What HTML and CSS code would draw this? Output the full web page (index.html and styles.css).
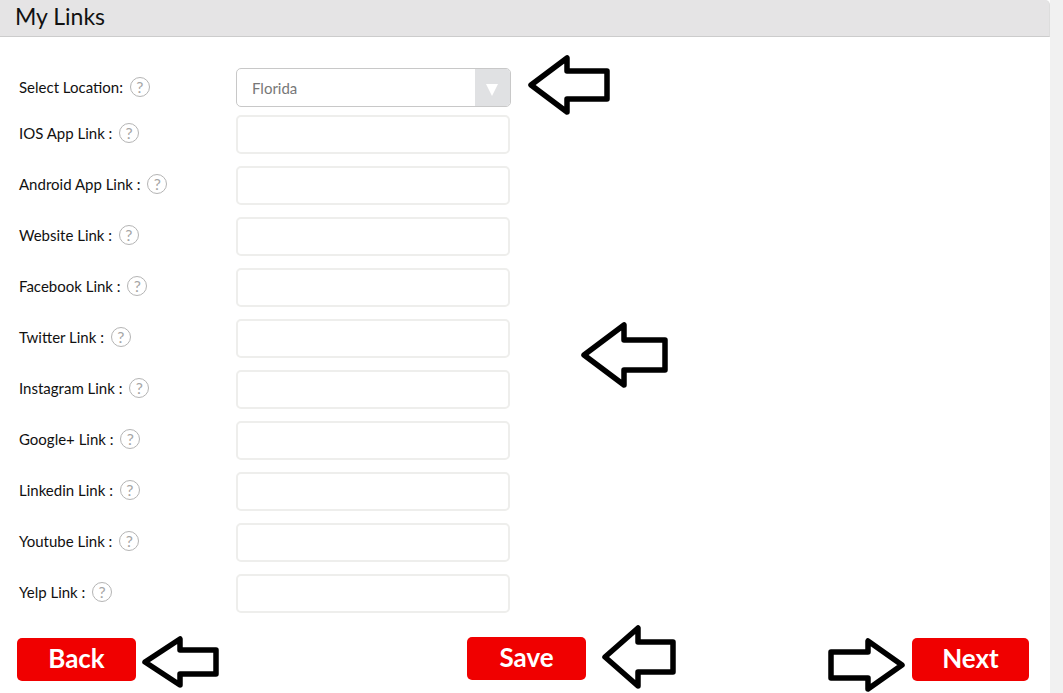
FILE: index.html
```html
<!DOCTYPE html>
<html lang="en">
<head>
  <meta charset="UTF-8" />
  <title>My Links</title>
  <link rel="stylesheet" href="styles.css">
</head>
<body>
  <div class="page">
    <header class="title-bar"><h1>My Links</h1></header>

    <form class="links-form">
      <div class="form-row first-row">
        <label>Select Location: <span class="help">?</span></label>
        <div class="select-box">
          <span class="select-value">Florida</span>
          <span class="select-arrow"></span>
        </div>
      </div>
      <div class="form-row"><label>IOS App Link : <span class="help">?</span></label><input type="text"></div>
      <div class="form-row"><label>Android App Link : <span class="help">?</span></label><input type="text"></div>
      <div class="form-row"><label>Website Link : <span class="help">?</span></label><input type="text"></div>
      <div class="form-row"><label>Facebook Link : <span class="help">?</span></label><input type="text"></div>
      <div class="form-row"><label>Twitter Link : <span class="help">?</span></label><input type="text"></div>
      <div class="form-row"><label>Instagram Link : <span class="help">?</span></label><input type="text"></div>
      <div class="form-row"><label>Google+ Link : <span class="help">?</span></label><input type="text"></div>
      <div class="form-row"><label>Linkedin Link : <span class="help">?</span></label><input type="text"></div>
      <div class="form-row"><label>Youtube Link : <span class="help">?</span></label><input type="text"></div>
      <div class="form-row"><label>Yelp Link : <span class="help">?</span></label><input type="text"></div>
    </form>

    <div class="actions">
      <button type="button" class="red-btn">Back</button>
      <button type="button" class="red-btn save-btn">Save</button>
      <button type="button" class="red-btn next-btn">Next</button>
    </div>
  </div>

  <!-- annotation arrows drawn over the screenshot -->
  <svg class="arrow arrow-location" width="84" height="62" viewBox="0 0 84 62"><path d="M4 31 L40 4 V17 H80 V45 H40 V58 Z"/></svg>
  <svg class="arrow arrow-fields" width="88" height="68" viewBox="0 0 88 68"><path d="M3 34 L43 4 V19 H84 V49 H43 V64 Z"/></svg>
  <svg class="arrow arrow-back" width="78" height="54" viewBox="0 0 78 54"><path d="M3 27 L38 4 V15 H74 V39 H38 V50 Z"/></svg>
  <svg class="arrow arrow-save" width="76" height="66" viewBox="0 0 76 66"><path d="M4 33 L37 4 V18 H72 V48 H37 V62 Z"/></svg>
  <svg class="arrow arrow-next" width="78" height="56" viewBox="0 0 78 56"><path d="M74 28 L40 4 V15 H3 V41 H40 V52 Z"/></svg>
</body>
</html>
```

FILE: styles.css
```css
* { box-sizing: border-box; }
html, body {
  height: 100%;
}
body {
  margin: 0;
  background: #f1f1f1;
  font-family: 'Lato', sans-serif;
  color: #111;
  overflow: hidden;
}
.page {
  width: 1050px;
  height: 693px;
  background: #fff;
}
.title-bar {
  height: 37px;
  background: #e5e4e5;
  border-bottom: 1px solid #ccc;
  border-right: 1px solid #ddd;
  border-top-right-radius: 5px;
  padding: 3px 15px 0;
}
.title-bar h1 {
  margin: 0;
  font-size: 23px;
  font-weight: 400;
  line-height: 27px;
}
.links-form {
  padding: 31px 0 0 19px;
}
.form-row {
  display: flex;
  align-items: center;
  height: 39px;
  margin-bottom: 12px;
}
.first-row {
  margin-bottom: 8px;
}
.form-row label {
  width: 217px;
  font-size: 15px;
  display: flex;
  align-items: center;
  gap: 3px;
  white-space: pre;
  padding-bottom: 4px;
}
.first-row label {
  padding-bottom: 2px;
}
.help {
  width: 20px;
  height: 20px;
  border: 1px solid #b4b4b4;
  border-radius: 50%;
  color: #a6a6a6;
  font-size: 16px;
  line-height: 18px;
  text-align: center;
}
.form-row input {
  width: 274px;
  height: 39px;
  border: 2px solid #eeeeec;
  border-radius: 5px;
  background: #fff;
}
.select-box {
  width: 275px;
  height: 39px;
  border: 1px solid #c8c8c8;
  border-radius: 5px;
  display: flex;
  align-items: center;
  justify-content: space-between;
  overflow: hidden;
}
.select-value {
  padding-left: 15px;
  font-size: 15px;
  color: #777;
}
.select-arrow {
  width: 35px;
  height: 100%;
  background: #e0e1e3;
  position: relative;
}
.select-arrow::after {
  content: "";
  position: absolute;
  left: 11px;
  top: 15px;
  border-left: 6px solid transparent;
  border-right: 6px solid transparent;
  border-top: 12px solid #fff;
}
.actions {
  display: flex;
  justify-content: space-between;
  align-items: flex-start;
  padding: 0 21px 0 17px;
  margin-top: 25px;
}
.red-btn {
  width: 119px;
  height: 43px;
  background: #f00000;
  color: #fff;
  border: none;
  border-radius: 5px;
  font-family: inherit;
  font-size: 26px;
  font-weight: 700;
  padding: 0 0 3px;
}
.save-btn {
  margin-top: -1px;
  margin-left: 5px;
}
.next-btn {
  width: 117px;
}
.arrow {
  position: absolute;
  fill: #fff;
  stroke: #000;
  stroke-width: 5.5;
  stroke-linejoin: round;
}
.arrow-location { left: 527px; top: 54px; }
.arrow-fields { left: 581px; top: 321px; }
.arrow-back { left: 142px; top: 635px; }
.arrow-save { left: 601px; top: 624px; }
.arrow-next { left: 828px; top: 637px; }
```
